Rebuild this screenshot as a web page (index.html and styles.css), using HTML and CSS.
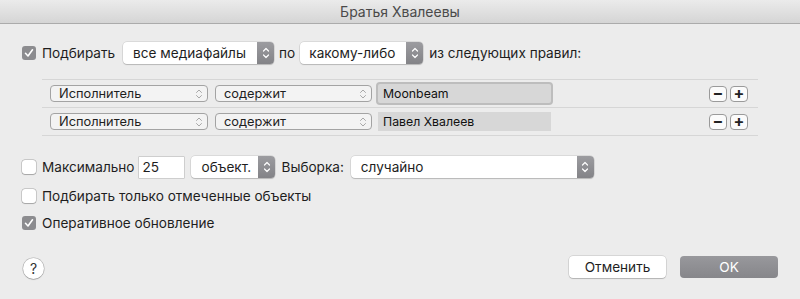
FILE: index.html
```html
<!DOCTYPE html>
<html lang="ru">
<head>
<meta charset="utf-8">
<title>Братья Хвалеевы</title>
<link rel="stylesheet" href="styles.css">
</head>
<body>
<div class="window">
  <div class="titlebar">Братья Хвалеевы</div>
  <div class="content">
    <div class="row row1">
      <span class="cb checked"><svg viewBox="0 0 14 14"><path d="M3.5 7.3 L6 10 L10.5 3.8" /></svg></span>
      <span class="lbl">Подбирать</span>
      <span class="popup w-media"><span class="ptext">все медиафайлы</span><span class="stepper"><svg viewBox="0 0 8 14"><path d="M1.5 5 L4 2.5 L6.5 5 M1.5 9 L4 11.5 L6.5 9" /></svg></span></span>
      <span class="lbl">по</span>
      <span class="popup w-any"><span class="ptext">какому-либо</span><span class="stepper"><svg viewBox="0 0 8 14"><path d="M1.5 5 L4 2.5 L6.5 5 M1.5 9 L4 11.5 L6.5 9" /></svg></span></span>
      <span class="lbl">из следующих правил:</span>
    </div>

    <div class="rules">
      <div class="rule">
        <span class="spopup w-field"><span>Исполнитель</span><svg class="schev" viewBox="0 0 8 12"><path d="M1.5 4.5 L4 2 L6.5 4.5 M1.5 7.5 L4 10 L6.5 7.5" /></svg></span>
        <span class="spopup w-op"><span>содержит</span><svg class="schev" viewBox="0 0 8 12"><path d="M1.5 4.5 L4 2 L6.5 4.5 M1.5 7.5 L4 10 L6.5 7.5" /></svg></span>
        <span class="tfield focus">Moonbeam</span>
        <span class="spacer"></span>
        <span class="sbtn">−</span><span class="sbtn">+</span>
      </div>
      <div class="rule">
        <span class="spopup w-field"><span>Исполнитель</span><svg class="schev" viewBox="0 0 8 12"><path d="M1.5 4.5 L4 2 L6.5 4.5 M1.5 7.5 L4 10 L6.5 7.5" /></svg></span>
        <span class="spopup w-op"><span>содержит</span><svg class="schev" viewBox="0 0 8 12"><path d="M1.5 4.5 L4 2 L6.5 4.5 M1.5 7.5 L4 10 L6.5 7.5" /></svg></span>
        <span class="tfield">Павел Хвалеев</span>
        <span class="spacer"></span>
        <span class="sbtn">−</span><span class="sbtn">+</span>
      </div>
    </div>

    <div class="row row3">
      <span class="cb"></span>
      <span class="lbl">Максимально</span>
      <span class="numfield">25</span>
      <span class="popup w-obj"><span class="ptext">объект.</span><span class="stepper"><svg viewBox="0 0 8 14"><path d="M1.5 5 L4 2.5 L6.5 5 M1.5 9 L4 11.5 L6.5 9" /></svg></span></span>
      <span class="lbl">Выборка:</span>
      <span class="popup w-rand"><span class="ptext">случайно</span><span class="stepper"><svg viewBox="0 0 8 14"><path d="M1.5 5 L4 2.5 L6.5 5 M1.5 9 L4 11.5 L6.5 9" /></svg></span></span>
    </div>

    <div class="row row4">
      <span class="cb"></span>
      <span class="lbl">Подбирать только отмеченные объекты</span>
    </div>

    <div class="row row5">
      <span class="cb checked"><svg viewBox="0 0 14 14"><path d="M3.5 7.3 L6 10 L10.5 3.8" /></svg></span>
      <span class="lbl">Оперативное обновление</span>
    </div>

    <div class="bottom">
      <span class="help">?</span>
      <span class="spacer"></span>
      <span class="btn cancel">Отменить</span>
      <span class="btn ok">OK</span>
    </div>
  </div>
</div>
</body>
</html>
```

FILE: styles.css
```css
* { box-sizing: border-box; }
html, body {
  margin: 0;
  padding: 0;
  background: #ececec;
}
body {
  width: 800px;
  height: 299px;
  overflow: hidden;
  font-family: Inter, "Liberation Sans", Arial, sans-serif;
  font-size: 13.6px;
  color: #1e1e1e;
}
.window {
  width: 800px;
  height: 299px;
}
.titlebar {
  height: 24px;
  border-bottom: 1px solid #ababab;
  background: linear-gradient(#ebebeb, #d5d5d5);
  text-align: center;
  line-height: 23px;
  font-size: 14px;
  color: #4a4a4a;
}
.content {
  padding: 0 22px 0 22px;
}
.row {
  display: flex;
  align-items: center;
  height: 22px;
}
.row1 { margin-top: 18px; }
.row3 { margin-top: 20px; }
.row4 { margin-top: 7px; }
.row5 { margin-top: 5px; }

.lbl { white-space: nowrap; }

.cb {
  width: 14px;
  height: 14px;
  border-radius: 3px;
  background: #fff;
  box-shadow: 0 0 0 0.5px rgba(0,0,0,0.28), 0 0.5px 1px rgba(0,0,0,0.18);
  margin-right: 6px;
  flex: none;
  display: flex;
}
.cb.checked {
  background: #8c8c8f;
  box-shadow: none;
}
.cb svg {
  width: 14px;
  height: 14px;
  fill: none;
  stroke: #fff;
  stroke-width: 1.6;
  stroke-linecap: round;
  stroke-linejoin: round;
}

.popup {
  height: 22px;
  display: flex;
  align-items: stretch;
  background: #fff;
  border-radius: 4px;
  box-shadow: 0 0 0 0.5px rgba(0,0,0,0.15), 0 1px 1px rgba(0,0,0,0.16);
  flex: none;
}
.ptext {
  flex: 1;
  padding-left: 10px;
  line-height: 22px;
  white-space: nowrap;
  overflow: hidden;
}
.stepper {
  width: 17px;
  background: linear-gradient(#9c9ca0, #838387);
  border-radius: 0 4px 4px 0;
  display: flex;
  align-items: center;
  justify-content: center;
}
.stepper svg {
  width: 8px;
  height: 14px;
  fill: none;
  stroke: #fff;
  stroke-width: 1.2;
  stroke-linecap: round;
  stroke-linejoin: round;
}
.w-media { width: 151px; margin-left: 8px; margin-right: 5px; }
.w-any { width: 123px; margin-left: 5px; margin-right: 6px; }
.w-obj { width: 84px; margin-left: 7px; margin-right: 6px; }
.w-rand { width: 243px; margin-left: 7px; }
.w-any .ptext { padding-left: 9px; }

.rules {
  margin-top: 15px;
  margin-left: 20px;
  width: 716px;
  border-top: 1px solid #d6d6d6;
}
.rule {
  height: 28px;
  border-bottom: 1px solid #d6d6d6;
  display: flex;
  align-items: center;
  padding-left: 8px;
  padding-right: 10px;
}
.spopup {
  height: 17px;
  border: 1px solid #a3a3a3;
  border-radius: 4px;
  background: #f3f3f3;
  display: flex;
  align-items: center;
  justify-content: space-between;
  padding: 0 4px 0 8px;
  font-size: 12.8px;
  flex: none;
}
.schev {
  width: 8px;
  height: 12px;
  fill: none;
  stroke: #a8a8a8;
  stroke-width: 1;
  stroke-linecap: round;
  stroke-linejoin: round;
}
.w-field { width: 158px; }
.w-op { width: 157px; margin-left: 7px; }
.tfield {
  width: 173px;
  height: 19px;
  margin-left: 6px;
  background: #d7d7d7;
  font-size: 12.3px;
  line-height: 19px;
  padding-left: 5px;
  flex: none;
  color: #111;
}
.tfield.focus {
  box-shadow: 0 0 0 2px #bdbdbd;
  border-radius: 2px;
}
.spacer { flex: 1; }
.sbtn {
  width: 18px;
  height: 16px;
  border: 1px solid #9a9a9a;
  border-radius: 4px;
  background: #fbfbfb;
  font-size: 16px;
  font-weight: bold;
  line-height: 13px;
  text-align: center;
  margin-left: 3px;
  flex: none;
  color: #222;
}

.numfield {
  width: 45px;
  height: 21px;
  margin-left: 5px;
  background: #fff;
  box-shadow: 0 0 0 0.5px rgba(0,0,0,0.25);
  padding-left: 3px;
  line-height: 21px;
  flex: none;
}

.bottom {
  margin-top: 22px;
  height: 22px;
  display: flex;
  align-items: center;
}
.help {
  width: 21px;
  height: 21px;
  border-radius: 50%;
  background: #fff;
  box-shadow: 0 0 0 0.5px rgba(0,0,0,0.25), 0 1px 1px rgba(0,0,0,0.15);
  text-align: center;
  line-height: 21px;
  font-size: 14px;
  color: #333;
  margin-top: 2px;
  margin-left: 1px;
}
.btn {
  height: 22px;
  border-radius: 4px;
  text-align: center;
  line-height: 22px;
  flex: none;
}
.cancel {
  width: 97px;
  background: #fff;
  box-shadow: 0 0 0 0.5px rgba(0,0,0,0.18), 0 1px 1px rgba(0,0,0,0.16);
  margin-right: 14px;
}
.ok {
  width: 98px;
  background: linear-gradient(#98989c, #86868a);
  color: #fff;
}
```
